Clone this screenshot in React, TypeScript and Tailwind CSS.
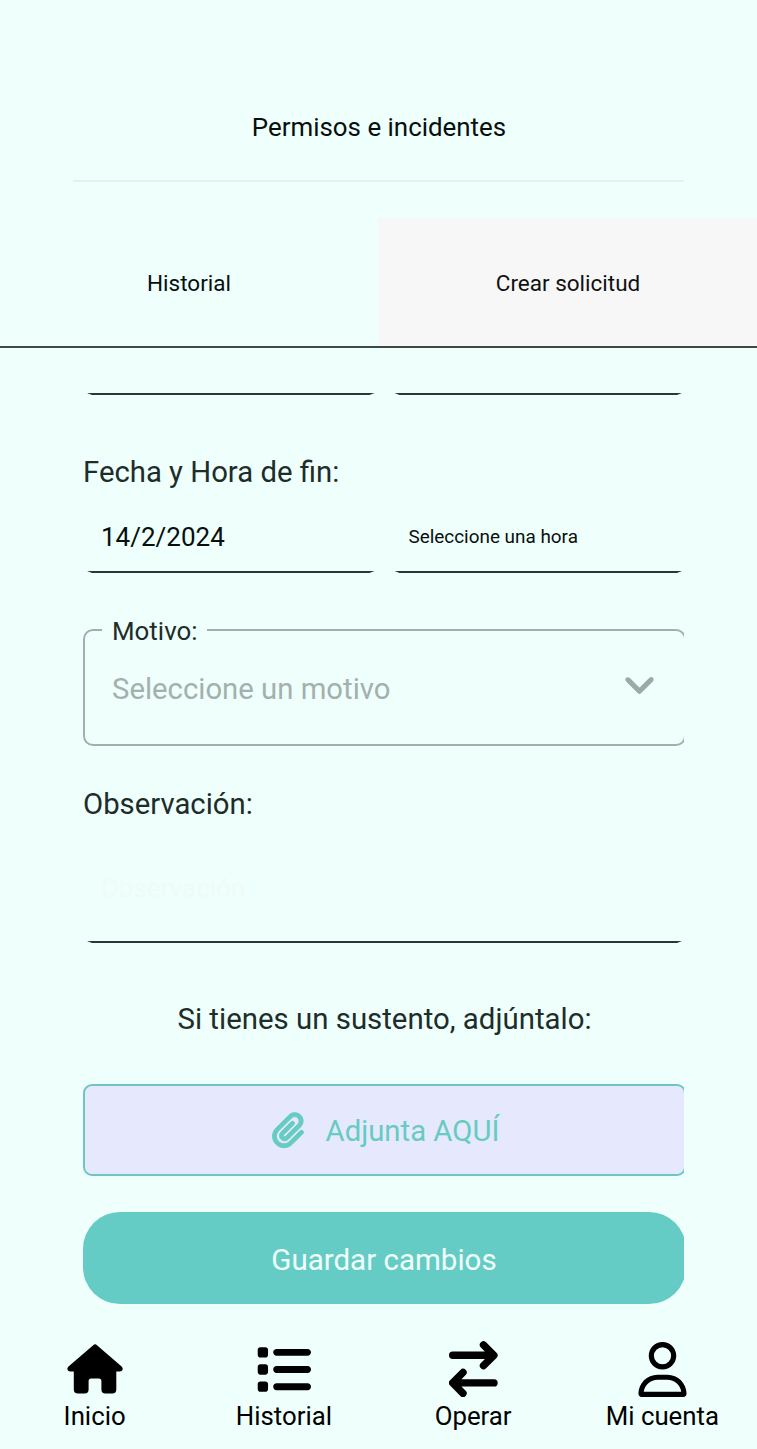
import type { ReactNode } from "react";
import { FaChevronDown, FaList, FaPaperclip, FaRegUser } from "react-icons/fa6";

function UnderlineField({ children, className = "" }: { children?: ReactNode; className?: string }) {
  return (
    <div className={`flex flex-col ${className}`}>
      <div className="flex flex-1 items-center pl-[18px]">{children}</div>
      <div className="mx-[4px] h-[2px] bg-[#2b3735] [clip-path:polygon(0_0,100%_0,calc(100%-5px)_100%,5px_100%)]" />
    </div>
  );
}

function HouseIcon() {
  return (
    <svg width="56" height="50" viewBox="0 0 56 50" fill="currentColor">
      <path d="M26.2 1.2a2.8 2.8 0 0 1 3.8 0L54.6 22.4c2.2 2 1 5.2-2 5.2H49.3V45.4a4 4 0 0 1-4 4H38.4a4 4 0 0 1-4-4V37a2.600 2.600 0 0 0-2.600-2.600H24.200A2.600 2.600 0 0 0 21.600 37V45.400a4 4 0 0 1-4 4H10.800a4 4 0 0 1-4-4V27.600H3.500c-3 0-4.200-3.200-2-5.200Z" />
    </svg>
  );
}

function TransferIcon() {
  return (
    <svg
      width="49"
      height="56"
      viewBox="0 0 49 56"
      fill="none"
      stroke="currentColor"
      strokeWidth="7.4"
      strokeLinecap="round"
      strokeLinejoin="round"
    >
      <path d="M3.7 14.3H44M34.5 3.9L44.9 14.3L34.5 24.7" />
      <path d="M45 41.9H5M14 31.5L3.7 41.9L14 52.3" />
    </svg>
  );
}

function NavItem({ icon, label }: { icon: ReactNode; label: string }) {
  return (
    <a className="flex flex-1 flex-col items-center text-[25.8px] leading-[30px] text-black">
      <span className="mb-[4.500px] flex h-[55px] items-center text-[55px]">{icon}</span>
      {label}
    </a>
  );
}

export default function App() {
  return (
    <div className="flex h-[1449px] w-[757px] flex-col overflow-hidden bg-[#eefffc] font-['Roboto',sans-serif] text-[#202c2a]">
      <header className="mr-[73px] ml-[73px] flex h-[182px] items-end justify-center border-b-2 border-[#e1f1f4] pb-[37px]">
        <h1 className="pl-px text-[25.9px] leading-[32px] text-[#07100f]">Permisos e incidentes</h1>
      </header>

      <div className="mt-[36px] flex h-[130px] border-b-2 border-[#414847] text-[22.5px] text-[#07100f]">
        <button className="w-[378px] pt-[3px]">Historial</button>
        <button className="flex-1 bg-[#f7f7f7] pt-[3px] pl-px text-[#101112]">Crear solicitud</button>
      </div>

      <main className="ml-[83px] h-[961px] w-[601px] overflow-hidden">
        <div className="flex w-[603px] flex-col">
          <div className="flex gap-[12px]">
            <UnderlineField className="h-[47px] w-[296px]" />
            <UnderlineField className="h-[47px] w-[296px]" />
          </div>

          <label className="mt-[59px] text-[29.3px] leading-[36px]">Fecha y Hora de fin:</label>
          <div className="mt-[11px] flex gap-[12px]">
            <UnderlineField className="h-[72px] w-[296px] pt-[2px] text-[26px] text-[#07100f]">
              14/2/2024
            </UnderlineField>
            <UnderlineField className="h-[72px] w-[296px] pt-[2px] text-[18.9px] text-[#07100f]">
              Seleccione una hora
            </UnderlineField>
          </div>

          <fieldset className="mt-[41px] h-[132px] rounded-[10px] border-2 border-[#a0b0ad] pr-[29.5px] pl-[17px]">
            <legend className="h-[31px] pr-[9px] pl-[10px] text-[25.9px] leading-[34px]">Motivo:</legend>
            <div className="flex items-center justify-between pt-[23px] pl-[10px]">
              <span className="text-[29.3px] leading-[40px] text-[#a3b0ae]">Seleccione un motivo</span>
              <FaChevronDown className="mb-[11px] text-[31px]" color="#9caaa7" strokeWidth={18} />
            </div>
          </fieldset>

          <label className="mt-[40px] text-[29.3px] leading-[36px]">Observación:</label>
          <UnderlineField className="mt-[13px] h-[108px] text-[26px] text-[#f1faf9]">
            Observación
          </UnderlineField>

          <p className="mt-[58px] text-center text-[29.4px] leading-[36px]">
            Si tienes un sustento, adjúntalo:
          </p>
          <button className="mt-[47px] flex h-[92px] items-center justify-center gap-[20px] rounded-[9px] border-2 border-[#6dc7c0] bg-[#e6e9fd] text-[29.3px] text-[#66cbc2]">
            <FaPaperclip className="overflow-visible text-[36px]" strokeWidth={14} stroke="currentColor" />
            <span className="pt-[4px]">Adjunta AQUÍ</span>
          </button>
          <button className="mt-[36px] h-[92px] rounded-[37px] bg-[#65ccc5] pt-[4px] pr-px text-[29.5px] text-[#effffc]">
            Guardar cambios
          </button>
        </div>
      </main>

      <nav className="flex pt-[32.5px]">
        <NavItem icon={<HouseIcon />} label="Inicio" />
        <NavItem icon={<FaList />} label="Historial" />
        <NavItem icon={<TransferIcon />} label="Operar" />
        <NavItem icon={<FaRegUser />} label="Mi cuenta" />
      </nav>
    </div>
  );
}
